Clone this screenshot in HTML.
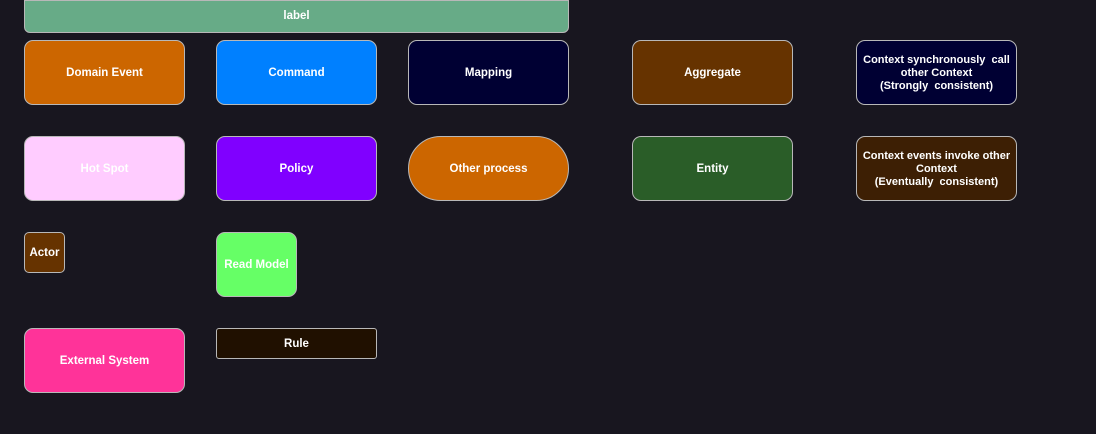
<!DOCTYPE html><html><head><style>
body{margin:0;width:1096px;height:434px;background:#18161f;overflow:hidden;font-family:"Liberation Sans",Arial,sans-serif;}
.b{position:absolute;box-sizing:border-box;border:1px solid #b8b8b8;border-radius:9px;color:#fff;font-weight:bold;font-size:11.5px;display:flex;align-items:center;justify-content:center;text-align:center;line-height:13px;padding-top:2px;}
</style></head><body>
<div class="b" style="left:24px;top:0;width:545px;height:33px;background:#67ab87;border-radius:0 0 6px 6px;padding-top:0">label</div>
<div class="b" style="left:24px;top:40px;width:161px;height:65px;background:#cc6600">Domain Event</div>
<div class="b" style="left:216px;top:40px;width:161px;height:65px;background:#0080ff">Command</div>
<div class="b" style="left:408px;top:40px;width:161px;height:65px;background:#000033">Mapping</div>
<div class="b" style="left:632px;top:40px;width:161px;height:65px;background:#663300">Aggregate</div>
<div class="b" style="left:856px;top:40px;width:161px;height:65px;background:#000033;font-size:11px">Context synchronously&nbsp; call<br>other Context<br>(Strongly&nbsp; consistent)</div>
<div class="b" style="left:24px;top:136px;width:161px;height:65px;background:#ffccff">Hot Spot</div>
<div class="b" style="left:216px;top:136px;width:161px;height:65px;background:#8000ff">Policy</div>
<div class="b" style="left:408px;top:136px;width:161px;height:65px;background:#cc6600;border-radius:33px">Other process</div>
<div class="b" style="left:632px;top:136px;width:161px;height:65px;background:#2a5d28">Entity</div>
<div class="b" style="left:856px;top:136px;width:161px;height:65px;background:#3d1f04;font-size:11px">Context events invoke other<br>Context<br>(Eventually&nbsp; consistent)</div>
<div class="b" style="left:24px;top:232px;width:41px;height:41px;background:#663300;border-radius:5px">Actor</div>
<div class="b" style="left:216px;top:232px;width:81px;height:65px;background:#66ff66">Read Model</div>
<div class="b" style="left:24px;top:328px;width:161px;height:65px;background:#ff3399">External System</div>
<div class="b" style="left:216px;top:328px;width:161px;height:31px;background:#201000;border-radius:3px">Rule</div>
</body></html>
